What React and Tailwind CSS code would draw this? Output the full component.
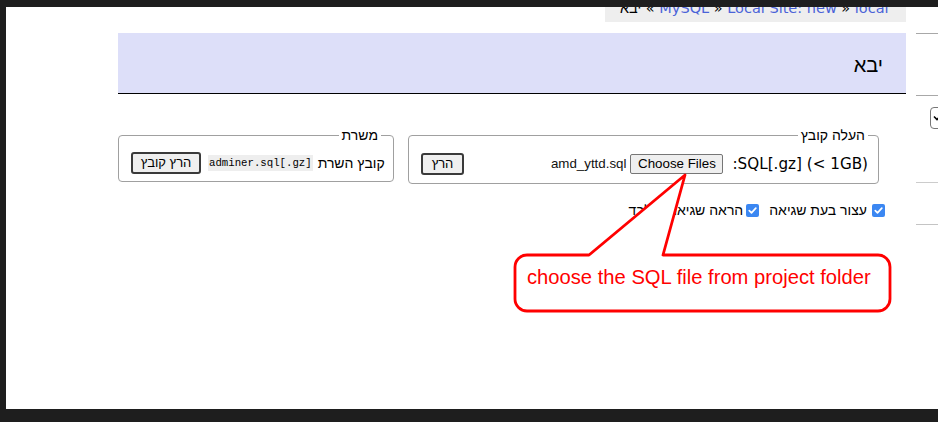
import React from "react";

const HE = "font-['Liberation_Sans',Arial,sans-serif]";

function Check() {
  return (
    <span className="w-[13px] h-[13px] rounded-[2px] bg-[#3b87f2] flex items-center justify-center shrink-0">
      <svg width="9" height="9" viewBox="0 0 9 9">
        <path d="M1.3 4.6 L3.5 6.8 L7.8 2.2" fill="none" stroke="white" strokeWidth="1.7" strokeLinecap="round" strokeLinejoin="round" />
      </svg>
    </span>
  );
}

export default function App() {
  return (
    <div className="w-[938px] h-[422px] bg-[#1e1e1e] pt-[7px] pl-[6px] relative overflow-hidden font-['DejaVu_Sans',Verdana,sans-serif] text-black">
      <div className="h-[402px] bg-white flex overflow-hidden">
        {/* main column */}
        <div className="ml-[112px] w-[788px] flex flex-col shrink-0">
          {/* breadcrumb */}
          <div className="flex justify-end -mt-[15px]">
            <div className="w-[301px] h-[30px] bg-[#eeeeee] flex items-end pl-[15px] pb-[5px] text-[14.5px] leading-[18px] whitespace-nowrap">
              <span className={HE}>יבא</span>
              <span>&nbsp;«&nbsp;</span>
              <span className="text-[#4a63d8]">MySQL</span>
              <span>&nbsp;»&nbsp;</span>
              <span className="text-[#4a63d8]">Local Site: new</span>
              <span>&nbsp;»&nbsp;</span>
              <span className="text-[#4a63d8]">local</span>
            </div>
          </div>

          {/* header */}
          <div className="mt-[11px] h-[61px] bg-[#dddff9] border-b border-black flex items-center justify-end pr-[23px] pt-[4px]">
            <span className={HE + " text-[20px] leading-[24px]"}>יבא</span>
          </div>

          {/* fieldsets */}
          <div className="mt-[32px] flex gap-[14px] items-start">
            <fieldset dir="rtl" className="w-[276px] min-w-0 shrink-0 border border-[#a0a0a0] rounded-[4px] pr-[10px] pl-[12px] pt-[8px] pb-[7px]">
              <legend className={HE + " px-[3px] mr-[2px] text-[14px] leading-[18px]"}>משרת</legend>
              <div dir="ltr" className="flex items-center whitespace-nowrap">
                <button className={HE + " shrink-0 w-[70px] h-[22px] border-2 border-[#3a3a3a] rounded-[3px] bg-[#efefef] text-[13px] leading-[16px] flex items-center justify-center"}>הרץ קובץ</button>
                <code className="shrink-0 ml-[7px] bg-[#eeeeee] font-['Liberation_Mono',monospace] text-[10.7px] leading-[16px] px-[1px]">adminer.sql[.gz]</code>
                <span className={HE + " shrink-0 ml-[5px] text-[14px] leading-[18px]"}>קובץ השרת</span>
              </div>
            </fieldset>

            <fieldset dir="rtl" className="w-[471px] min-w-0 shrink-0 border border-[#a0a0a0] rounded-[4px] pr-[10px] pl-[12px] pt-[9px] pb-[8px]">
              <legend className={HE + " px-[3px] text-[14px] leading-[18px]"}>העלה קובץ</legend>
              <div dir="ltr" className="flex items-center justify-between whitespace-nowrap">
                <button className={HE + " w-[43px] h-[22px] border-2 border-[#3a3a3a] rounded-[3px] bg-[#efefef] text-[13px] leading-[16px] flex items-center justify-center"}>הרץ</button>
                <div className="flex items-center">
                  <span className="font-['Liberation_Sans',Arial,sans-serif] text-[13.33px] leading-[16px] text-[#111]">amd_yttd.sql</span>
                  <button className="ml-[4px] w-[93px] h-[20px] border border-[#767676] rounded-[2px] bg-[#efefef] font-['Liberation_Sans',Arial,sans-serif] text-[13.33px] leading-[16px] flex items-center justify-center">Choose Files</button>
                  <span className="ml-[9px] text-[15.2px] leading-[18px] whitespace-nowrap">:SQL[.gz] (&lt; 1GB)</span>
                </div>
              </div>
            </fieldset>
          </div>

          {/* checkboxes */}
          <div className="mt-[17px] h-[18px] flex items-center justify-end pr-[21px] whitespace-nowrap">
            <span className={HE + " text-[14px] leading-[18px]"}>הראה שגיאות בלבד</span>
            <span className="ml-[3px]"><Check /></span>
            <span className={HE + " ml-[10px] text-[14px] leading-[18px]"}>עצור בעת שגיאה</span>
            <span className="ml-[5px]"><Check /></span>
          </div>
        </div>

        {/* right sidebar fragment */}
        <div className="ml-[10px] w-[22px] flex flex-col overflow-hidden shrink-0">
          <div className="mt-[26px] h-px bg-[#a8a8a8]" />
          <div className="mt-[61px] h-px bg-[#a8a8a8]" />
          <div className="mt-[11px] ml-[14px] w-[30px] h-[22px] border border-[#767676] rounded-[4px] bg-white flex items-center pl-[2px] shrink-0">
            <svg width="8" height="8" viewBox="0 0 8 8">
              <path d="M1 2.5 L4 5.5 L7 2.5" fill="none" stroke="black" strokeWidth="1.6" />
            </svg>
          </div>
          <div className="mt-[53px] h-px bg-[#cccccc]" />
          <div className="mt-[41px] h-px bg-[#c4c4c4]" />
        </div>
      </div>

      {/* callout annotation */}
      <svg className="absolute left-0 top-0" width="938" height="422" viewBox="0 0 938 422">
        <path
          d="M 527 255 L 589 255 L 685 175 L 663 255 L 878 255 A 12 12 0 0 1 890 267 L 890 299 A 12 12 0 0 1 878 311 L 527 311 A 12 12 0 0 1 515 299 L 515 267 A 12 12 0 0 1 527 255 Z"
          fill="white"
          stroke="#ff0000"
          strokeWidth="2.8"
          strokeLinejoin="round"
        />
      </svg>
      <div className="absolute left-[527px] top-[266px] text-[20.2px] leading-[22px] text-[#ff0000] font-['Liberation_Sans',Arial,sans-serif] whitespace-nowrap">
        choose the SQL file from project folder
      </div>
    </div>
  );
}
